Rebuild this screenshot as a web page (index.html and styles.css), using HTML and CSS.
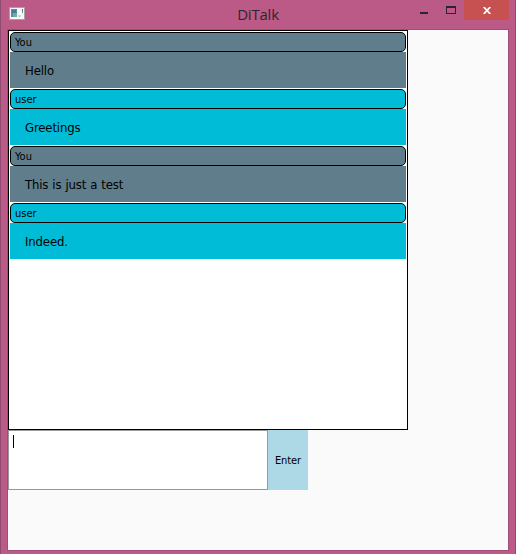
FILE: index.html
```
<!DOCTYPE html>
<html lang="en">
<head>
<meta charset="utf-8">
<title>DiTalk</title>
<link rel="stylesheet" href="styles.css">
</head>
<body>
<div class="window">
  <header class="titlebar">
    <svg class="app-icon" width="16" height="13" viewBox="0 0 16 13" shape-rendering="crispEdges">
      <rect width="16" height="13" fill="#aaa0a4"/>
      <rect x="1" y="1" width="14" height="11" fill="#f8f8f8"/>
      <rect x="2" y="2" width="6" height="8" fill="#568fa6"/>
      <rect x="3" y="3" width="4" height="3" fill="#4b77a2"/>
      <rect x="4" y="6" width="4" height="4" fill="#69b092"/>
      <rect x="9" y="8" width="3" height="2" fill="#d4d4d6"/>
      <rect x="13" y="2" width="1" height="2" fill="#456c9c"/>
      <rect x="13" y="4" width="1" height="2" fill="#55a384"/>
    </svg>
    <h1 class="title">DiTalk</h1>
    <div class="controls">
      <svg width="64" height="20" viewBox="0 0 64 20" shape-rendering="crispEdges">
        <rect x="20" y="12" width="8" height="2" fill="#2b2429"/>
        <path d="M46 6h10v8H46zM47 8v5h8V8z" fill="#2b2429" fill-rule="evenodd"/>
      </svg>
      <button class="close" aria-label="Close">
        <svg width="8" height="7" viewBox="0 0 8 7"><path d="M.7 0 7.3 7M7.3 0 .7 7" stroke="#fff" stroke-width="1.8"/></svg>
      </button>
    </div>
  </header>
  <main class="content">
    <section class="chat">
      <article class="message own"><div class="author">You</div><div class="text">Hello</div></article>
      <article class="message"><div class="author">user</div><div class="text">Greetings</div></article>
      <article class="message own"><div class="author">You</div><div class="text">This is just a test</div></article>
      <article class="message"><div class="author">user</div><div class="text">Indeed.</div></article>
    </section>
    <div class="composer">
      <div class="input"><span class="caret"></span></div>
      <button class="enter">Enter</button>
    </div>
  </main>
</div>
</body>
</html>
```
FILE: styles.css
```
* { box-sizing: border-box; }
body {
  margin: 0;
  font-family: "DejaVu Sans Condensed", "DejaVu Sans", sans-serif;
  color: #000;
}
.window {
  width: 516px;
  height: 554px;
  padding: 0 6px 3px;
  background: #bb5987;
  border-left: 1px solid #924b70;
  border-right: 1px solid #924b70;
  overflow: hidden;
}
.titlebar {
  display: grid;
  grid-template-columns: 109px 1fr 109px;
  width: 502px;
  height: 29px;
}
.app-icon { margin: 7px 0 0 2px; }
.title {
  margin: 0;
  text-align: center;
  font: 400 15px/29px "Open Sans", sans-serif;
  letter-spacing: -0.2px;
  color: #30252e;
}
.controls { display: flex; height: 20px; }
.controls > svg { flex: none; }
.close {
  display: flex;
  align-items: center;
  justify-content: center;
  width: 45px;
  height: 20px;
  padding: 1px 0 0 1px;
  border: 0;
  background: #c75050;
  flex: none;
}
.content {
  width: 502px;
  height: 522px;
  border: 1px solid #a04d77;
  background: #fafafa;
}
.chat {
  display: flex;
  flex-direction: column;
  gap: 1px;
  width: 400px;
  height: 400px;
  padding: 1px;
  border: 1px solid #000;
  background: #fff;
}
.message { --tone: #00bcd7; }
.own { --tone: #607d8b; }
.author {
  height: 20px;
  padding-left: 4px;
  border: 1px solid #000;
  border-radius: 5px;
  background: var(--tone);
  font-size: 11px;
  line-height: 19px;
}
.text {
  height: 36px;
  padding: 1px 0 0 15px;
  background: var(--tone);
  font-size: 13px;
  line-height: 36px;
  letter-spacing: -0.15px;
  word-spacing: 0.5px;
}
.composer { display: flex; height: 60px; }
.input {
  width: 260px;
  padding: 4px;
  border: 1px solid #999;
  background: #fff;
}
.caret {
  display: block;
  width: 1px;
  height: 13px;
  background: #000;
}
.enter {
  width: 40px;
  padding: 0;
  border: 0;
  background: #add8e6;
  color: #000;
  font: 11px "DejaVu Sans Condensed", sans-serif;
  letter-spacing: -0.1px;
}
```
